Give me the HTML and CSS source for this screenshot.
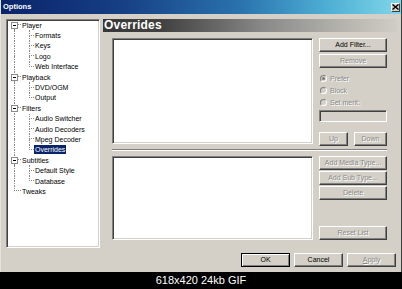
FILE: index.html
```html
<!DOCTYPE html>
<html>
<head>
<meta charset="utf-8">
<link rel="stylesheet" href="styles.css">
</head>
<body>
<div class="dialog">
  <div class="titlebar">
    <span class="title">Options</span>
    <span class="close"><svg width="7" height="6" viewBox="0 0 7 6"><path d="M0.5 0.5 L6.5 5.5 M6.5 0.5 L0.5 5.5" stroke="#000" stroke-width="1.4"/></svg></span>
  </div>
  <div class="body">
    <div class="main">
      <div class="tree">
        <div class="row"><span class="c first"><i class="u"></i><i class="d"></i><b class="box"><s></s></b></span><span class="t">Player</span></div>
        <div class="row"><span class="c pipe"><i class="u"></i><i class="d"></i></span><span class="c k tee"><i class="u"></i><i class="d"></i></span><span class="t">Formats</span></div>
        <div class="row"><span class="c pipe"><i class="u"></i><i class="d"></i></span><span class="c k tee"><i class="u"></i><i class="d"></i></span><span class="t">Keys</span></div>
        <div class="row"><span class="c pipe"><i class="u"></i><i class="d"></i></span><span class="c k tee"><i class="u"></i><i class="d"></i></span><span class="t">Logo</span></div>
        <div class="row"><span class="c pipe"><i class="u"></i><i class="d"></i></span><span class="c k ell"><i class="u"></i><i class="d"></i></span><span class="t">Web Interface</span></div>
        <div class="row"><span class="c tee"><i class="u"></i><i class="d"></i><b class="box"><s></s></b></span><span class="t">Playback</span></div>
        <div class="row"><span class="c pipe"><i class="u"></i><i class="d"></i></span><span class="c k tee"><i class="u"></i><i class="d"></i></span><span class="t">DVD/OGM</span></div>
        <div class="row"><span class="c pipe"><i class="u"></i><i class="d"></i></span><span class="c k ell"><i class="u"></i><i class="d"></i></span><span class="t">Output</span></div>
        <div class="row"><span class="c tee"><i class="u"></i><i class="d"></i><b class="box"><s></s></b></span><span class="t">Filters</span></div>
        <div class="row"><span class="c pipe"><i class="u"></i><i class="d"></i></span><span class="c k tee"><i class="u"></i><i class="d"></i></span><span class="t">Audio Switcher</span></div>
        <div class="row"><span class="c pipe"><i class="u"></i><i class="d"></i></span><span class="c k tee"><i class="u"></i><i class="d"></i></span><span class="t">Audio Decoders</span></div>
        <div class="row"><span class="c pipe"><i class="u"></i><i class="d"></i></span><span class="c k tee"><i class="u"></i><i class="d"></i></span><span class="t">Mpeg Decoder</span></div>
        <div class="row"><span class="c pipe"><i class="u"></i><i class="d"></i></span><span class="c k ell"><i class="u"></i><i class="d"></i></span><span class="t sel">Overrides</span></div>
        <div class="row"><span class="c tee"><i class="u"></i><i class="d"></i><b class="box"><s></s></b></span><span class="t">Subtitles</span></div>
        <div class="row"><span class="c pipe"><i class="u"></i><i class="d"></i></span><span class="c k tee"><i class="u"></i><i class="d"></i></span><span class="t">Default Style</span></div>
        <div class="row"><span class="c pipe"><i class="u"></i><i class="d"></i></span><span class="c k ell"><i class="u"></i><i class="d"></i></span><span class="t">Database</span></div>
        <div class="row"><span class="c ell"><i class="u"></i><i class="d"></i></span><span class="t">Tweaks</span></div>
      </div>
      <div class="panel">
        <div class="header">Overrides</div>
        <div class="content">
          <div class="section">
            <div class="list list-top"></div>
            <div class="btncol">
              <div class="btn">Add Filter...</div>
              <div class="btn off gap2">Remove</div>
              <div class="radio first-radio"><span class="rb"><span class="dot"></span></span><span class="off">Prefer</span></div>
              <div class="radio"><span class="rb"></span><span class="off">Block</span></div>
              <div class="radio"><span class="rb"></span><span class="off">Set merit:</span></div>
              <div class="field"></div>
              <div class="updown">
                <div class="btn off up">Up</div>
                <div class="btn off down">Down</div>
              </div>
            </div>
          </div>
          <div class="sep"></div>
          <div class="section">
            <div class="list list-bottom"></div>
            <div class="btncol">
              <div class="btn off">Add Media Type...</div>
              <div class="btn off gap1">Add Sub Type...</div>
              <div class="btn off gap1">Delete</div>
              <div class="btn off reset">Reset List</div>
            </div>
          </div>
        </div>
      </div>
    </div>
    <div class="footer">
      <div class="btn fbtn default">OK</div>
      <div class="btn fbtn">Cancel</div>
      <div class="btn fbtn off"><u>A</u>pply</div>
    </div>
  </div>
</div>
<div class="caption">618x420 24kb GIF</div>
</body>
</html>
```

FILE: styles.css
```css
* { box-sizing: border-box; }

body {
  margin: 0;
  width: 402px;
  height: 289px;
  overflow: hidden;
  background: #000;
  font-family: "Liberation Sans", Arial, sans-serif;
}

.dialog {
  width: 402px;
  height: 272px;
  background: #d4d0c8;
  border-left: 1px solid #e4e2dc;
  border-right: 1px solid #404040;
  display: flex;
  flex-direction: column;
}

.titlebar {
  height: 14px;
  flex: none;
  display: flex;
  align-items: center;
  justify-content: space-between;
  padding: 0 1px 0 2px;
  background: linear-gradient(90deg, #0a246a 0%, #163f84 30%, #2a73ae 60%, #4fb0d4 82%, #7fd6ea 100%);
}

.title {
  color: #fff;
  font-weight: bold;
  font-size: 7.5px;
  line-height: 14px;
}

.close {
  width: 9px;
  height: 9px;
  background: #d4d0c8;
  border: 1px solid;
  border-color: #fff #404040 #404040 #fff;
  display: flex;
  align-items: center;
  justify-content: center;
}

.close svg { display: block; }

.body {
  flex: 1;
  display: flex;
  flex-direction: column;
  padding: 5px 4px 5px 5px;
}

.main {
  height: 229px;
  flex: none;
  display: flex;
  gap: 3px;
}

/* tree */
.tree {
  width: 94px;
  height: 229px;
  background: #fff;
  border: 1px solid;
  border-color: #808080 #fff #fff #808080;
  box-shadow: inset 1px 1px 0 #404040, inset -1px -1px 0 #d4d0c8;
  padding: 0 1px 1px 1px;
  font-size: 7px;
  color: #000;
}

.row {
  height: 10.4px;
  display: flex;
  align-items: center;
}

.c {
  width: 13px;
  height: 100%;
  flex: none;
  display: grid;
  grid-template-rows: 1fr 1fr;
  grid-template-columns: 100%;
}

.c i {
  grid-column: 1;
  margin-left: 6px;
  display: block;
}

.c.k i { margin-left: 8px; }

.c .u { grid-row: 1; }
.c .d { grid-row: 2; }

.pipe .u, .pipe .d { border-left: 1px dotted #8a8a8a; }
.tee .u { border-left: 1px dotted #8a8a8a; border-bottom: 1px dotted #8a8a8a; }
.tee .d { border-left: 1px dotted #8a8a8a; }
.ell .u { border-left: 1px dotted #8a8a8a; border-bottom: 1px dotted #8a8a8a; }
.first .u { border-bottom: 1px dotted #8a8a8a; }
.first .d { border-left: 1px dotted #8a8a8a; }

.box {
  grid-row: 1 / 3;
  grid-column: 1;
  align-self: center;
  margin-left: 3px;
  width: 7px;
  height: 7px;
  background: #fff;
  border: 1px solid #8a8a8a;
  display: flex;
  align-items: center;
  justify-content: center;
}

.box s {
  display: block;
  width: 3px;
  height: 1px;
  background: #000;
}

.t {
  padding: 0 1px;
  line-height: 9px;
  white-space: nowrap;
}

.t.sel {
  background: #0a246a;
  color: #fff;
}

/* right panel */
.panel {
  flex: 1;
  display: flex;
  flex-direction: column;
}

.header {
  height: 13px;
  flex: none;
  background: linear-gradient(90deg, #383838 0%, #414141 20%, #6a6a6a 40%, #8a8a8a 55%, #b0aea8 78%, #d0cdc6 100%);
  color: #fff;
  font-weight: bold;
  font-size: 12px;
  line-height: 13px;
  padding-left: 1px;
  letter-spacing: 0.2px;
}

.content {
  padding: 6px 10px 0 9px;
  display: flex;
  flex-direction: column;
}

.section {
  display: flex;
  gap: 6px;
  align-items: stretch;
}

.list {
  width: 201px;
  flex: none;
  background: #fff;
  border: 1px solid;
  border-color: #808080 #fff #fff #808080;
  box-shadow: inset 1px 1px 0 #404040, inset -1px -1px 0 #d4d0c8;
}

.list-top { height: 106px; }
.list-bottom { height: 84px; }

.btncol {
  width: 68px;
  flex: none;
  display: flex;
  flex-direction: column;
}

.btn {
  height: 14px;
  flex: none;
  background: #d4d0c8;
  border: 1px solid;
  border-color: #fff #404040 #404040 #fff;
  box-shadow: inset -1px -1px 0 #808080;
  font-size: 7px;
  line-height: 12px;
  text-align: center;
  color: #000;
  white-space: nowrap;
}

.off, .btn.off {
  color: #8a8a8a;
  text-shadow: 1px 1px 0 #fff;
}

.gap2 { margin-top: 2px; }
.gap1 { margin-top: 1px; }

.radio {
  height: 12px;
  display: flex;
  align-items: center;
  gap: 3px;
  padding-left: 1px;
  font-size: 7px;
}

.first-radio { margin-top: 4px; }

.rb {
  width: 7px;
  height: 7px;
  border-radius: 50%;
  border: 1px solid;
  border-color: #808080 #fff #fff #808080;
  background: #d4d0c8;
  display: flex;
  align-items: center;
  justify-content: center;
}

.dot {
  width: 3px;
  height: 3px;
  border-radius: 50%;
  background: #7a7a7a;
}

.field {
  margin-top: 2px;
  height: 12px;
  background: #d4d0c8;
  border: 1px solid;
  border-color: #808080 #fff #fff #808080;
  box-shadow: inset 1px 1px 0 #404040;
}

.updown {
  margin-top: 10px;
  display: flex;
  gap: 6px;
}

.up { width: 29px; }
.down { width: 33px; }

.reset { margin-top: auto; }

.sep {
  margin: 3px 0 5px 0;
  height: 2px;
  border-top: 1px solid #808080;
  border-bottom: 1px solid #fff;
}

.footer {
  margin-top: 5px;
  height: 14px;
  flex: none;
  display: flex;
  justify-content: flex-end;
  gap: 4px;
  padding-right: 1px;
}

.fbtn { width: 49px; }

.btn.default {
  border: 1px solid #000;
  box-shadow: inset 1px 1px 0 #fff, inset -1px -1px 0 #808080;
  line-height: 12px;
}

.caption {
  height: 17px;
  color: #fff;
  font-size: 11px;
  line-height: 16px;
  text-align: center;
}
```
